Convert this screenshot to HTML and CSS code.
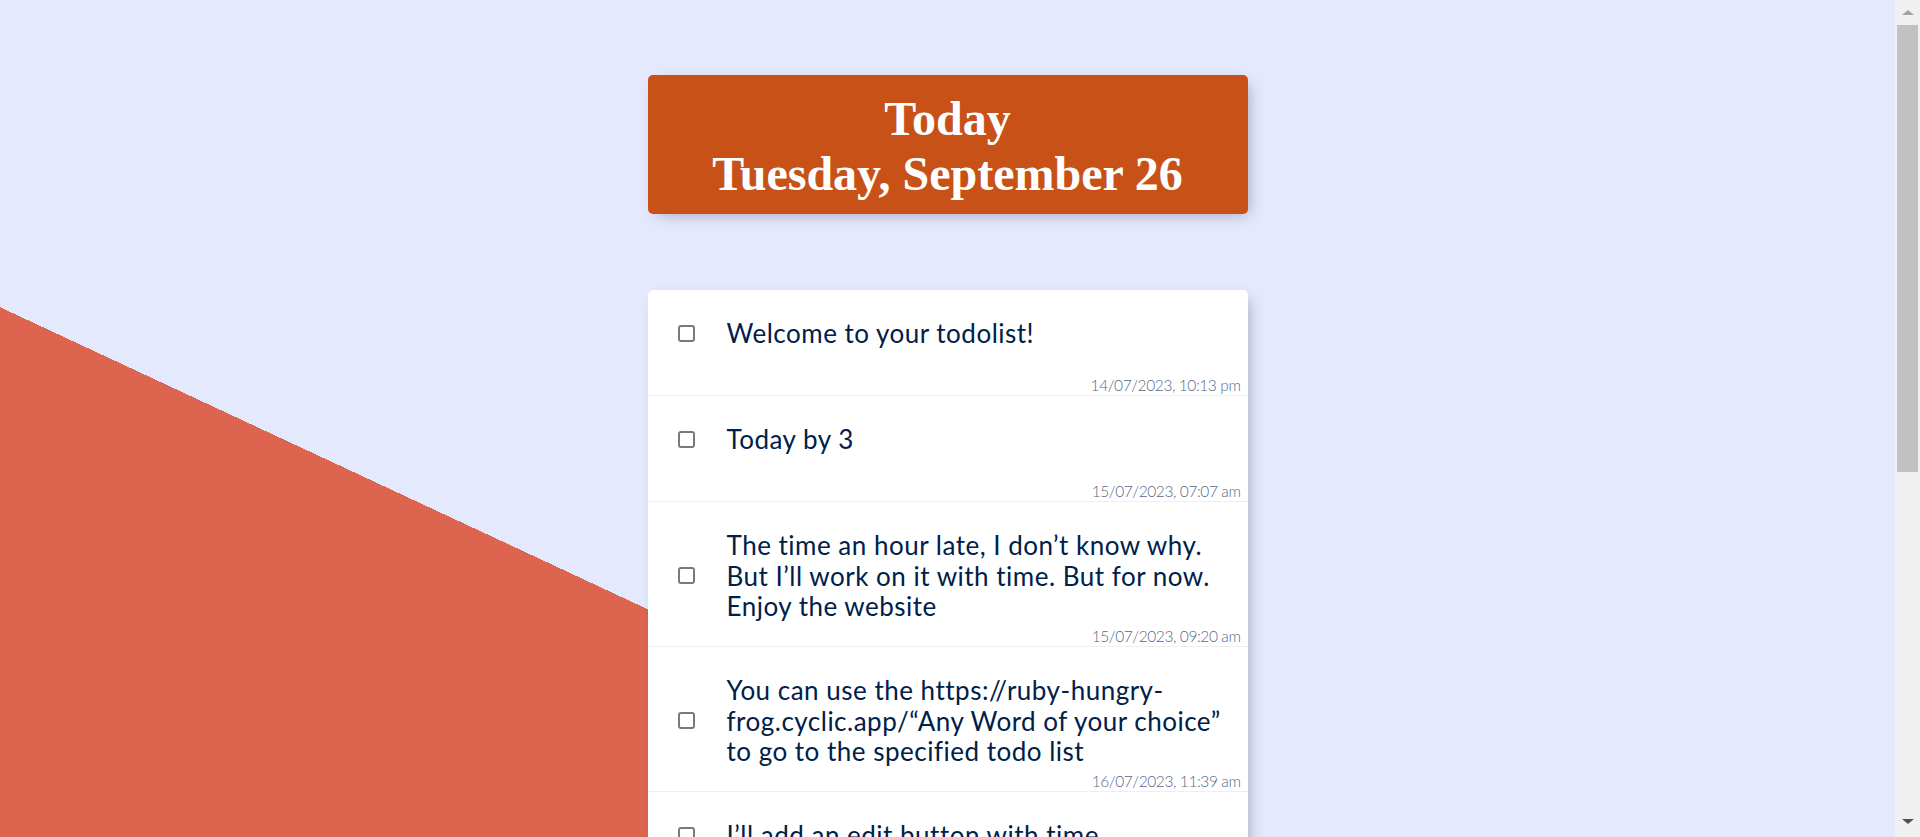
FILE: index.html
```html
<!DOCTYPE html>
<html lang="en">
<head>
<meta charset="utf-8">
<title>To Do List</title>
<link rel="stylesheet" href="styles.css">
</head>
<body>
<div class="viewport">
  <div class="page">
    <div class="box heading">
      <h1>Today<br>Tuesday, September 26</h1>
    </div>
    <div class="box list">
      <div class="item">
        <div class="row">
          <input type="checkbox" class="check">
          <p class="text">Welcome to your todolist!</p>
        </div>
        <div class="ts">14/07/2023, 10:13 pm</div>
      </div>
      <div class="item">
        <div class="row">
          <input type="checkbox" class="check">
          <p class="text">Today by 3</p>
        </div>
        <div class="ts">15/07/2023, 07:07 am</div>
      </div>
      <div class="item">
        <div class="row">
          <input type="checkbox" class="check">
          <p class="text">The time an hour late, I don’t know why. But I’ll work on it with time. But for now. Enjoy the website</p>
        </div>
        <div class="ts">15/07/2023, 09:20 am</div>
      </div>
      <div class="item">
        <div class="row">
          <input type="checkbox" class="check">
          <p class="text">You can use the https://ruby-hungry-frog.cyclic.app/“Any Word of your choice” to go to the specified todo list</p>
        </div>
        <div class="ts">16/07/2023, 11:39 am</div>
      </div>
      <div class="item">
        <div class="row">
          <input type="checkbox" class="check">
          <p class="text">I’ll add an edit button with time</p>
        </div>
        <div class="ts">16/07/2023, 11:41 am</div>
      </div>
      <form class="new-item">
        <input type="text" class="new-input" placeholder="New Item" autocomplete="off">
        <button type="button" class="add">+</button>
      </form>
    </div>
  </div>
</div>
<div class="scrollbar">
  <div class="sb-btn up"></div>
  <div class="sb-track"><div class="sb-thumb"></div></div>
  <div class="sb-btn down"></div>
</div>
</body>
</html>
```
FILE: styles.css
```css
html, body {
  margin: 0;
  height: 100%;
}

body {
  display: flex;
  overflow: hidden;
  background: #E4E9FD;
  font-family: Lato, "Noto Sans", sans-serif;
}

.viewport {
  flex: 1;
  min-width: 0;
  overflow: hidden;
}

.page {
  min-height: 1498px;
  box-sizing: border-box;
  padding: 75px 0 60px;
  background-color: #E4E9FD;
  background-image: linear-gradient(25deg, #DD654F 50%, #E4E9FD 50%);
}

.box {
  box-sizing: border-box;
  width: 600px;
  margin: 0 auto;
  border-radius: 5px;
  box-shadow: 5px 5px 15px -5px rgba(0, 0, 0, 0.3);
}

.heading {
  background: #C75117;
  text-align: center;
  padding: 16px 10px 13px;
}

.heading h1 {
  margin: 0;
  font-family: "Liberation Serif", "Times New Roman", serif;
  font-weight: bold;
  font-size: 48px;
  line-height: 55px;
  color: #ffffff;
}

.list {
  margin-top: 76px;
  background: #ffffff;
}

.item {
  display: flex;
  flex-direction: column;
  min-height: 105px;
  border-bottom: 1px solid #efefef;
}

.row {
  display: flex;
  align-items: center;
  padding: 28px 0 4.5px;
}

.check {
  appearance: none;
  -webkit-appearance: none;
  flex: none;
  box-sizing: border-box;
  width: 17px;
  height: 17px;
  margin: 0 32px 0 30px;
  border: 2px solid #7a7a7a;
  border-radius: 3px;
  background: #ffffff;
}

.text {
  flex: 1;
  margin: 0;
  padding-right: 12px;
  font-size: 26px;
  line-height: 30.5px;
  letter-spacing: 0.5px;
  color: #00204a;
}

.ts {
  margin-top: auto;
  padding-right: 7px;
  text-align: right;
  font-size: 15.5px;
  font-weight: 300;
  letter-spacing: -0.4px;
  line-height: 20px;
  color: #56688a;
}

.new-item {
  display: flex;
  align-items: center;
  gap: 20px;
  min-height: 90px;
  padding-left: 30px;
}

.new-input {
  width: 420px;
  height: 60px;
  border: none;
  font-family: inherit;
  font-size: 22px;
  color: #00204a;
  text-align: center;
}

.add {
  width: 50px;
  height: 50px;
  border: 0;
  border-radius: 50%;
  background: #C75117;
  color: #ffffff;
  font-size: 30px;
  line-height: 1;
}

.scrollbar {
  flex: none;
  width: 25px;
  display: flex;
  flex-direction: column;
  background: #f0f0f0;
}

.sb-btn {
  flex: none;
  height: 25px;
  display: flex;
  align-items: center;
  justify-content: center;
}

.sb-btn::before {
  content: "";
  width: 0;
  height: 0;
  border-left: 6px solid transparent;
  border-right: 6px solid transparent;
}

.sb-btn.up::before {
  border-bottom: 5px solid #a3a3a3;
}

.sb-btn.down::before {
  border-top: 5px solid #505050;
  margin-bottom: 6px;
}

.sb-track {
  flex: 1;
  padding: 0 2px;
}

.sb-thumb {
  height: 447px;
  background: #c1c1c1;
}
```
